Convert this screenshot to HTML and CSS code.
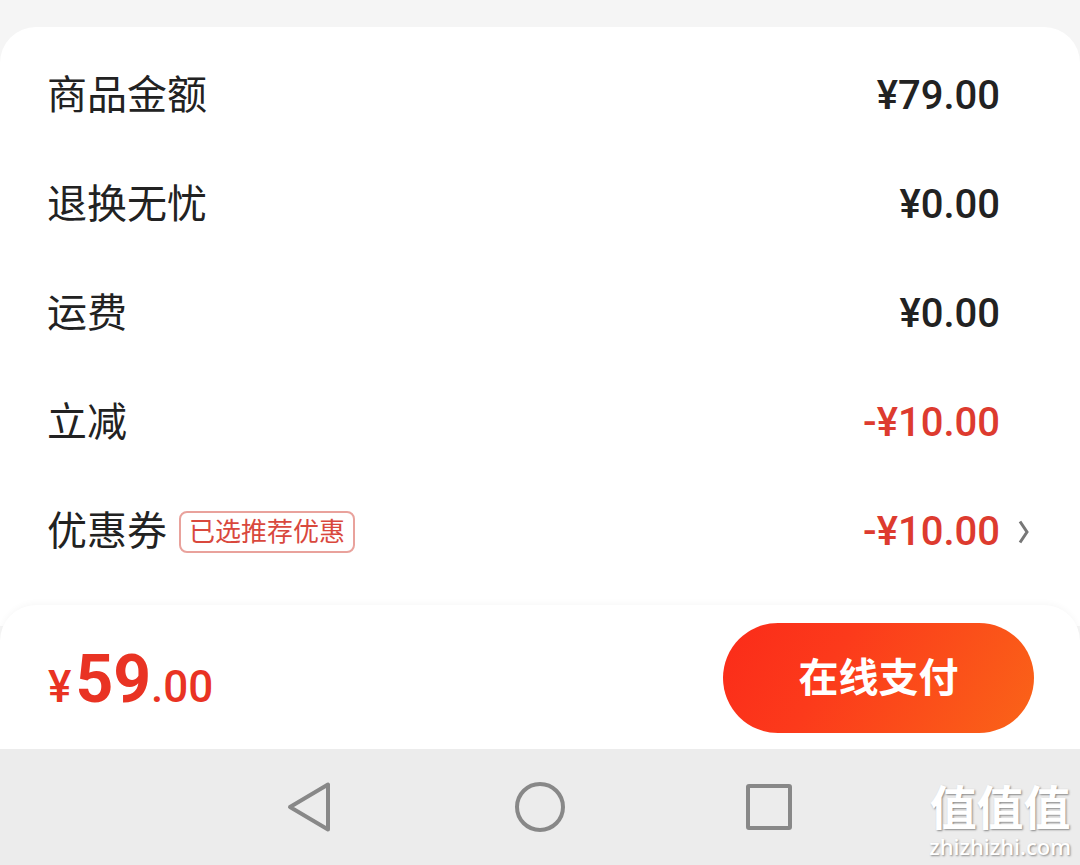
FILE: index.html
```
<!DOCTYPE html>
<html lang="zh-CN">
<head>
<meta charset="utf-8">
<meta name="viewport" content="width=device-width, initial-scale=1">
<title>确认订单</title>
<link rel="stylesheet" href="styles.css">
</head>

<body>
    <main class="summary">
        <div class="row">
            <span class="label">商品金额</span>
            <span class="amount">¥79.00</span>
        </div>
        <div class="row">
            <span class="label">退换无忧</span>
            <span class="amount">¥0.00</span>
        </div>
        <div class="row">
            <span class="label">运费</span>
            <span class="amount">¥0.00</span>
        </div>
        <div class="row">
            <span class="label">立减</span>
            <span class="amount discount">-¥10.00</span>
        </div>
        <div class="row">
            <span class="label">优惠券</span>
            <span class="tag">已选推荐优惠</span>
            <span class="amount discount">-¥10.00</span>
            <button class="more" aria-label="选择优惠券">
                <svg width="12" height="24" viewBox="0 0 12 24"><path d="M2 1.500 L9 12 L2 22.500" fill="none" stroke="#777" stroke-width="3"/></svg>
            </button>
        </div>
    </main>

    <div class="pay-bar">
        <div class="total">
            <span class="currency">¥</span><span class="integer">59</span><span class="decimal">.00</span>
        </div>
        <button class="pay-button">在线支付</button>
    </div>

    <!-- system navigation -->
    <nav class="system-nav">
        <button class="nav-button" aria-label="返回">
            <svg width="60" height="60" viewBox="0 0 60 60"><path d="M48 7.500 V52.500 L10 30 Z"/></svg>
        </button>
        <button class="nav-button" aria-label="主页">
            <svg width="60" height="60" viewBox="0 0 60 60"><circle cx="30" cy="30" r="23"/></svg>
        </button>
        <button class="nav-button" aria-label="最近任务">
            <svg width="60" height="60" viewBox="0 0 60 60"><rect x="8" y="9" width="42" height="42" rx="1"/></svg>
        </button>
        <div class="watermark">
            <div class="watermark-name">值值值</div>
            <div class="watermark-site">zhizhizhi.com</div>
        </div>
    </nav>
</body>

</html>
```
FILE: styles.css
```
* {
    box-sizing: border-box;
}

body {
    margin: 0;
    min-height: 100vh;
    display: flex;
    flex-direction: column;
    background-color: #f5f5f5;
    color: #222222;
    font-family: "Noto Sans CJK SC", sans-serif;
}

button {
    padding: 0;
    border: 0;
    background: none;
    font-family: inherit;
    cursor: pointer;
}

svg {
    display: block;
}

.summary {
    margin-top: 27px;
    padding: 14px 80px 40px 47px;
    border-radius: 36px 36px 0 0;
    background-color: #ffffff;
}

.row {
    position: relative;
    display: flex;
    align-items: center;
    height: 109px;
}

.label {
    padding-bottom: 8px;
    font-size: 40px;
    line-height: 60px;
}

.tag {
    margin-left: 12px;
    padding: 0 8px 4px;
    border: 2px solid #e9a29c;
    border-radius: 8px;
    color: #d9483d;
    font-size: 26px;
    line-height: 34px;
}

.amount {
    margin-left: auto;
    font-family: Roboto, sans-serif;
    font-size: 40px;
    font-weight: 500;
    line-height: 60px;
}

.discount {
    color: #dd3b2f;
}

.more {
    position: absolute;
    right: -30px;
}

.pay-bar {
    display: flex;
    align-items: center;
    justify-content: space-between;
    margin-top: -21px;
    padding: 18px 46px 16px 48px;
    border-radius: 36px 36px 0 0;
    background-color: #ffffff;
    box-shadow: 0 -2px 6px rgba(0, 0, 0, 0.03);
}

.total {
    padding-top: 20px;
    color: #e93323;
    font-family: Roboto, sans-serif;
    font-weight: 500;
    line-height: 64px;
}

.currency,
.decimal {
    font-size: 44px;
}

.currency {
    margin-right: 4px;
}

.integer {
    font-size: 66px;
    font-weight: 700;
}

.pay-button {
    width: 311px;
    height: 110px;
    padding-bottom: 6px;
    border-radius: 55px;
    background-image: linear-gradient(120deg, #fb2b19 0%, #fc3a1b 35%, #fa6418 100%);
    color: #ffffff;
    font-size: 40px;
    font-weight: 700;
}

.system-nav {
    position: relative;
    flex: 1;
    display: flex;
    align-items: center;
    justify-content: center;
    gap: 170px;
    min-height: 116px;
    background-color: #ececec;
}

.nav-button path,
.nav-button circle,
.nav-button rect {
    fill: none;
    stroke: #888888;
    stroke-width: 4;
    stroke-linejoin: round;
}

.watermark {
    position: absolute;
    right: 9px;
    bottom: 6px;
    color: #ffffff;
    text-align: center;
    text-shadow: 1px 1px 2px #888888;
}

.watermark-name {
    margin-bottom: 2px;
    font-size: 47px;
    font-weight: 700;
    line-height: 52px;
}

.watermark-site {
    font-family: "Noto Sans", sans-serif;
    font-size: 22px;
    font-weight: 500;
    line-height: 26px;
}
```
